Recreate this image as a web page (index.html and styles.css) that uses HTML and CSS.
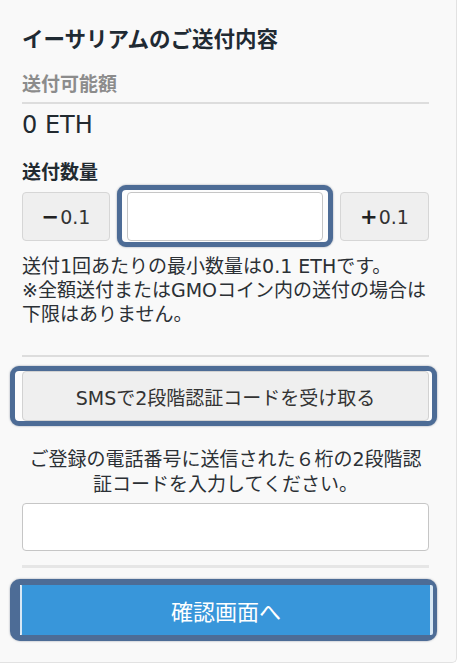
FILE: index.html
```html
<!DOCTYPE html>
<html lang="ja">
<head>
    <meta charset="UTF-8">
    <meta name="viewport" content="width=device-width, initial-scale=1.0">
    <title>イーサリアムのご送付内容</title>
    <link rel="stylesheet" href="styles.css">
</head>
<body>
    <div class="card">
        <h2 class="title">イーサリアムのご送付内容</h2>

        <p class="label">送付可能額</p>
        <hr class="rule">
        <p class="balance">0 ETH</p>

        <p class="field-name">送付数量</p>
        <div class="amount-row">
            <button class="step"><b class="sign">−</b>0.1</button>
            <div class="focus-ring ring-input">
                <input type="text" class="amount-input">
            </div>
            <button class="step"><b class="sign">+</b>0.1</button>
        </div>

        <p class="note">送付1回あたりの最小数量は0.1 ETHです。<br>※全額送付またはGMOコイン内の送付の場合は<br>下限はありません。</p>

        <hr class="rule rule-sms">

        <div class="focus-ring ring-wide">
            <button class="sms-btn">SMSで2段階認証コードを受け取る</button>
        </div>

        <p class="code-help">ご登録の電話番号に送信された６桁の2段階認証コードを入力してください。</p>
        <input type="text" class="code-input">

        <hr class="rule rule-thick">

        <div class="focus-ring ring-submit">
            <button class="submit-btn">確認画面へ</button>
        </div>
    </div>
</body>
</html>
```
FILE: styles.css
```css
body {
    margin: 0;
    background: #fff;
    font-family: "DejaVu Sans", "Noto Sans CJK JP", sans-serif;
    color: #2b3035;
}
.card {
    width: 407px;
    padding: 24px 27px 21px 22px;
    background: #f9f9f9;
    border-right: 1px solid #e2e2e2;
    border-bottom: 1px solid #e2e2e2;
    border-bottom-right-radius: 5px;
}
p {
    margin: 0;
}
.title {
    margin: 0;
    font-family: "Noto Sans CJK JP", sans-serif;
    font-size: 21.5px;
    line-height: 28px;
    font-weight: 700;
    color: #1f2a33;
}
.label {
    margin-top: 18px;
    font-family: "Noto Sans CJK JP", sans-serif;
    font-size: 19px;
    line-height: 26px;
    font-weight: 700;
    color: #8c8c8c;
}
.rule {
    margin: 6px 0 0;
    border: none;
    height: 2px;
    background: #dddddd;
}
.balance {
    margin-top: 6px;
    font-size: 24px;
    line-height: 30px;
    color: #222a30;
}
.field-name {
    margin-top: 18px;
    font-family: "Noto Sans CJK JP", sans-serif;
    font-size: 19px;
    line-height: 26px;
    font-weight: 700;
    color: #222a30;
}
.amount-row {
    margin-top: 8px;
    display: grid;
    grid-template-columns: 88px 1fr 89px;
    gap: 7px;
    align-items: start;
}
.step {
    height: 49px;
    padding: 0;
    background: #efefef;
    border: 1px solid #d6d6d6;
    border-radius: 4px;
    font-family: inherit;
    font-size: 19px;
    color: #333;
}
.sign {
    font-size: 21px;
    margin-right: 1px;
    color: #222;
}
.focus-ring {
    border: 5px solid #4d6c96;
    border-radius: 9px;
    background: #fdfdfd;
    box-shadow: 0 0 2px rgba(40, 60, 90, 0.5);
}
.ring-input {
    margin: -7px 0 -6px;
    padding: 2px 5px 1px;
}
.amount-input,
.code-input {
    display: block;
    box-sizing: border-box;
    width: 100%;
    height: 49px;
    margin: 0;
    background: #fff;
    border: 1px solid #c6c6c6;
    border-radius: 4px;
    font-family: inherit;
    font-size: 19px;
}
.note {
    margin-top: 13px;
    font-size: 19px;
    line-height: 24px;
    white-space: nowrap;
}
.rule-sms {
    margin-top: 29px;
}
.ring-wide {
    margin: 9px -8px 0 -12px;
    padding: 0 3px 0 7px;
}
.sms-btn {
    display: block;
    width: 100%;
    height: 50px;
    background: #efefef;
    border: 1px solid #d2d2d2;
    border-radius: 4px;
    font-family: inherit;
    font-size: 19px;
    color: #333;
}
.code-help {
    margin-top: 21px;
    font-size: 19px;
    line-height: 25px;
    text-align: center;
}
.code-input {
    margin-top: 6px;
    height: 48px;
}
.rule-thick {
    margin-top: 14px;
    height: 3px;
    background: #e6e6e6;
}
.ring-submit {
    margin: 11px -8px 0 -12px;
    border-width: 6px 4px 6px 10px;
    border-radius: 10px;
}
.submit-btn {
    display: block;
    width: 100%;
    height: 50px;
    background: #3896da;
    border: none;
    border-left: 2px solid #d8e8f5;
    border-right: 3px solid #d8e8f5;
    border-radius: 2px;
    font-family: "Noto Sans CJK JP", sans-serif;
    font-size: 22px;
    color: #fff;
}
```
